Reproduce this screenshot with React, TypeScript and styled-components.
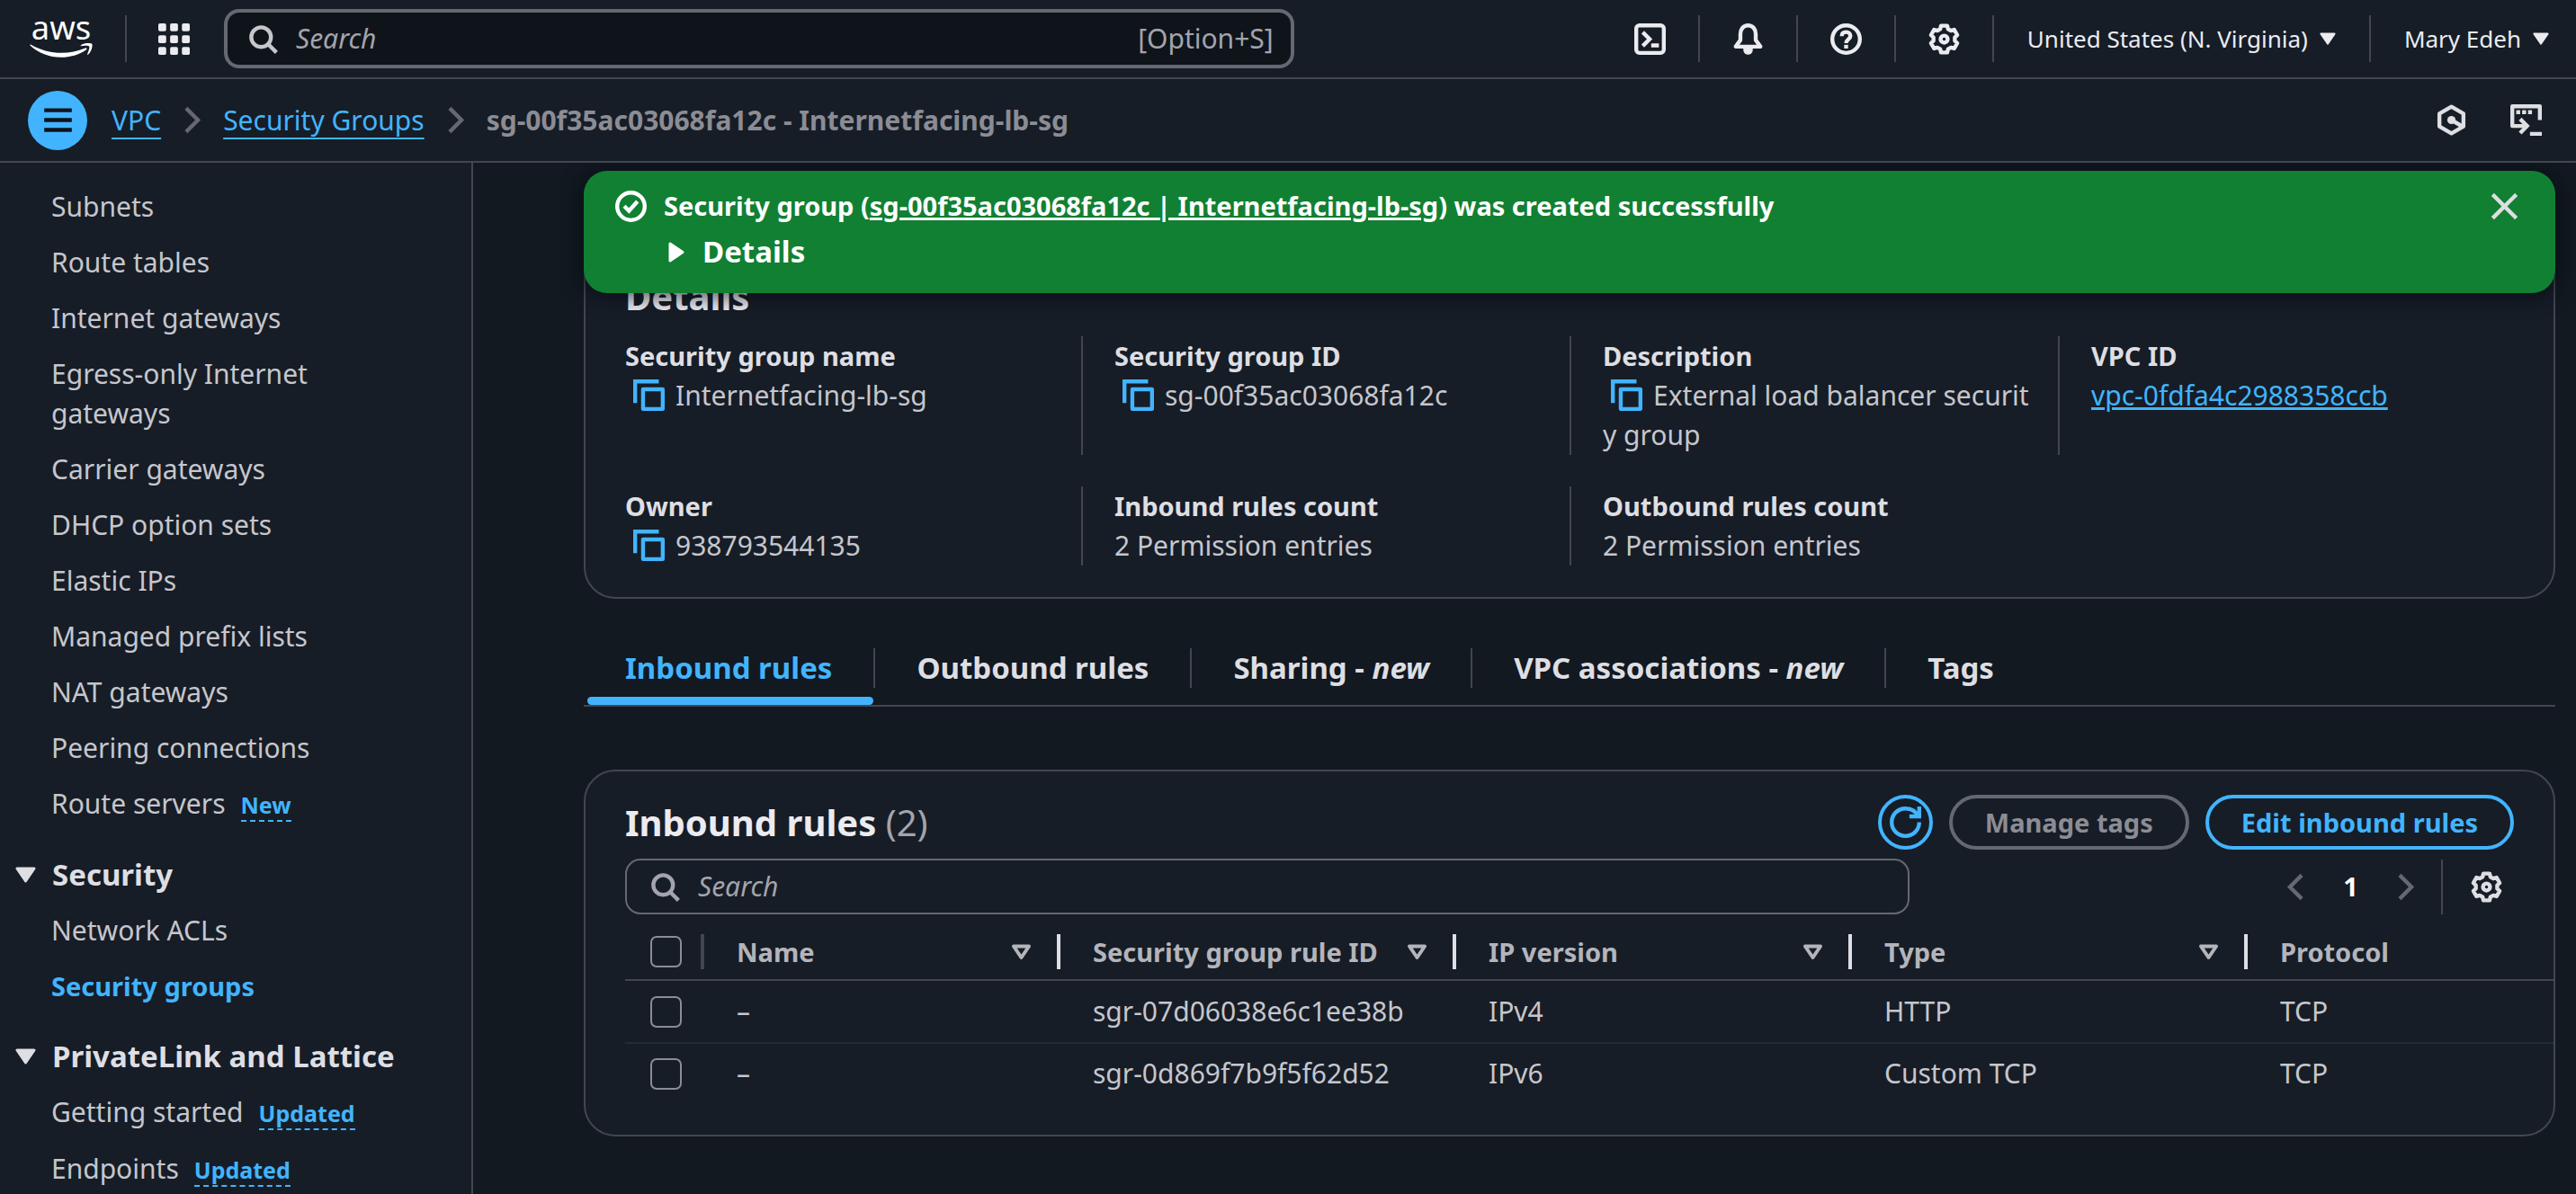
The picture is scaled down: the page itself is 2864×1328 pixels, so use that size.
import React from "react";
import styled, { createGlobalStyle, css } from "styled-components";

const color = {
  page: "#121920",
  surface: "#161d26",
  field: "#0f141a",
  line: "#424650",
  rowLine: "#232b37",
  control: "#656871",
  checkbox: "#8c8c94",
  link: "#42b4ff",
  heading: "#ebebf0",
  strong: "#dedee3",
  body: "#c6c6cd",
  muted: "#a4a4ad",
  disabled: "#8c8c94",
  success: "#118033",
};

const font = {
  badge: "25px",
  nav: "26px",
  label: "29px",
  body: "30px",
  title: "33px",
  heading: "40px",
};

const GlobalStyle = createGlobalStyle`
  *, *::before, *::after { box-sizing: border-box; }
  body {
    margin: 0;
    background: ${color.page};
    color: ${color.body};
    font-family: "Noto Sans", "Open Sans", sans-serif;
    font-size: ${font.body};
    line-height: 44px;
  }
  button, input { font: inherit; color: inherit; }
  button { background: none; border: 0; padding: 0; cursor: pointer; }
  h2, dl, dd, ul, p { margin: 0; padding: 0; }
  ul { list-style: none; }
  a { color: ${color.link}; }
`;

/* ---------- icons ---------- */

const Svg = styled.svg`
  display: block;
  flex: none;
  width: 35px;
  height: 35px;
  fill: none;
  stroke: currentColor;
  stroke-width: 2;
`;

const Icon = ({ children }: { children: React.ReactNode }) => (
  <Svg viewBox="0 0 16 16" aria-hidden="true">
    {children}
  </Svg>
);

const SearchIcon = () => (
  <Icon>
    <circle cx="7" cy="7" r="5" />
    <path d="m10.5 10.5 4.3 4.3" />
  </Icon>
);

const gearPath = (() => {
  const steps: string[] = [];
  for (let tooth = 0; tooth < 6; tooth += 1) {
    const middle = tooth * 60 - 90;
    [
      [5.5, -21],
      [7, -13],
      [7, 13],
      [5.5, 21],
    ].forEach(([radius, offset]) => {
      const angle = ((middle + offset) * Math.PI) / 180;
      steps.push(
        `${(8 + radius * Math.cos(angle)).toFixed(2)} ${(8 + radius * Math.sin(angle)).toFixed(2)}`,
      );
    });
  }
  return `M${steps.join("L")}Z`;
})();

const GearIcon = () => (
  <Icon>
    <path d={gearPath} strokeLinejoin="round" />
    <circle cx="8" cy="8" r="1.8" />
  </Icon>
);

const ShellIcon = () => (
  <Icon>
    <rect x="1" y="1" width="14" height="14" rx="1.6" />
    <path d="M4.3 4.5 7.8 8l-3.5 3.5M8.6 11.2h3.9" />
  </Icon>
);

const BellIcon = () => (
  <Icon>
    <path
      d="M8 1C5.6 1 4.1 3 4.1 5.4v3.1L1.7 11.8h12.6l-2.4-3.3V5.4C11.9 3 10.4 1 8 1Z"
      strokeLinejoin="round"
    />
    <path d="M5.6 12.5h4.8v1a2.4 2.4 0 0 1-4.8 0z" fill="currentColor" stroke="none" />
  </Icon>
);

const HelpIcon = () => (
  <Icon>
    <circle cx="8" cy="8" r="7" />
    <path d="M5.8 6.5C5.8 5.1 6.7 4.4 8 4.4s2.2.8 2.2 2C10.2 8 8 8.1 8 10" />
    <path d="M8 10.9v1.9" />
  </Icon>
);

const AppsIcon = () => (
  <Icon>
    <g fill="currentColor" stroke="none">
      {[0, 6, 12].map((y) =>
        [0, 6, 12].map((x) => <rect key={`${x}-${y}`} x={x} y={y} width="4" height="4" rx="0.8" />),
      )}
    </g>
  </Icon>
);

const MenuIcon = () => (
  <Icon>
    <path d="M1 3h14M1 8h14M1 13h14" />
  </Icon>
);

const ChevronRight = () => (
  <Icon>
    <path d="m5 2 6 6-6 6" />
  </Icon>
);

const ChevronLeft = () => (
  <Icon>
    <path d="M11 2 5 8l6 6" />
  </Icon>
);

const HexIcon = () => (
  <Icon>
    <path d="m8 1.2 6.1 3.5v6.6L8 14.8l-6.1-3.5V4.7z" strokeLinejoin="round" />
    <path d="m8 8 5.5 3.2" />
    <circle cx="8" cy="8" r="2.1" fill="currentColor" stroke="none" />
  </Icon>
);

const ConsoleIcon = () => (
  <Icon>
    <path d="M15 8V1H1v10h8" strokeLinejoin="round" />
    <path d="M5 7.5 8.5 11 5 14.6" />
    <path d="M3 4h2M6 4h2M9 4h2M10 15h6" />
  </Icon>
);

const CheckCircleIcon = () => (
  <Icon>
    <circle cx="8" cy="8" r="7" />
    <path d="m4.6 7.9 2.4 2.4 4.3-4.8" />
  </Icon>
);

const CloseIcon = () => (
  <Icon>
    <path d="m2 2 12 12M14 2 2 14" />
  </Icon>
);

const RefreshIcon = () => (
  <Icon>
    <path d="M15 8c0 3.9-3.1 7-7 7s-7-3.1-7-7 3.1-7 7-7c3.1 0 5.5 1.7 6.5 4.2" />
    <path d="M10 5h5V0" />
  </Icon>
);

const CopyIcon = () => (
  <Icon>
    <path d="M1 12V1h12" />
    <rect x="5" y="5" width="10" height="10" strokeLinejoin="round" />
  </Icon>
);

const CaretSvg = styled.svg<{ $width: number; $height: number }>`
  display: block;
  flex: none;
  width: ${(p) => p.$width}px;
  height: ${(p) => p.$height}px;
  stroke: currentColor;
  stroke-linejoin: round;
`;

const CaretDown = ({ small }: { small?: boolean }) => (
  <CaretSvg $width={small ? 18 : 23} $height={small ? 14 : 18} viewBox="0 0 23 18" fill="currentColor" strokeWidth="3">
    <path d="M2 2h19l-9.5 14z" />
  </CaretSvg>
);

const CaretRight = () => (
  <CaretSvg $width={18} $height={23} viewBox="0 0 18 23" fill="currentColor" strokeWidth="3">
    <path d="M2 2v19l14-9.5z" />
  </CaretSvg>
);

const SortCaret = () => (
  <CaretSvg $width={23} $height={18} viewBox="0 0 23 18" fill="none" strokeWidth="4">
    <path d="M3 2.5h17L11.5 15z" />
  </CaretSvg>
);

const LogoSvg = styled.svg`
  display: block;
  width: 70px;
  height: 42px;
  fill: #fff;
  overflow: visible;
`;

const Logo = () => (
  <LogoSvg viewBox="0 0 304 182" role="img" aria-label="aws">
    <text x="8" y="96" fontSize="158">
      aws
    </text>
    <path d="M273.5 143.7c-32.9 24.3-80.7 37.2-121.8 37.2-57.6 0-109.5-21.3-148.7-56.7-3.1-2.8-.3-6.6 3.4-4.4 42.4 24.6 94.7 39.5 148.8 39.5 36.5 0 76.6-7.6 113.5-23.2 5.5-2.5 10.2 3.6 4.8 7.6z" />
    <path d="M287.2 128.1c-4.2-5.4-27.8-2.6-38.5-1.3-3.2.4-3.7-2.4-.8-4.5 18.8-13.2 49.7-9.4 53.3-5 3.6 4.5-1 35.4-18.6 50.2-2.7 2.3-5.3 1.1-4.1-1.9 4-9.9 12.9-32.2 8.7-37.5z" />
  </LogoSvg>
);

/* ---------- global navigation ---------- */

const Shell = styled.div`
  display: flex;
  flex-direction: column;
  height: 100vh;
  overflow: hidden;
`;

const TopBar = styled.header`
  display: flex;
  align-items: center;
  flex: none;
  height: 88px;
  padding: 0 30px 0 33px;
  background: ${color.surface};
  border-bottom: 2px solid ${color.line};
  color: ${color.heading};
  font-size: ${font.nav};
`;

const LogoCell = styled.a`
  padding-right: 36px;
`;

const AppsButton = styled.button`
  display: flex;
  align-items: center;
  height: 52px;
  padding: 0 38px 0 35px;
  border-left: 2px solid ${color.line};
`;

const SearchField = styled.label<{ $filled?: boolean }>`
  display: flex;
  align-items: center;
  min-width: 0;
  padding: 0 25px;
  gap: 19px;
  border: 2px solid ${color.control};
  border-radius: 17px;
  color: ${color.muted};
  font-size: ${font.body};
  height: 62px;
  flex: none;
  width: 68%;

  ${(p) =>
    p.$filled &&
    css`
      flex: 10;
      width: auto;
      height: 66px;
      padding: 0 19px 0 22px;
      background: ${color.field};
      border-width: 4px;
      color: ${color.body};
    `}
`;

const SearchInput = styled.input`
  flex: 1;
  min-width: 0;
  padding: 0;
  border: 0;
  outline: 0;
  background: none;
  &::placeholder {
    color: ${color.muted};
    font-style: italic;
    opacity: 1;
  }
`;

const Shortcut = styled.span`
  color: ${color.muted};
`;

const Spacer = styled.div`
  flex: 3;
`;

const Tools = styled.div`
  display: flex;
  align-items: center;
`;

const NavButton = styled.button<{ $menu?: boolean }>`
  display: flex;
  align-items: center;
  gap: 13px;
  height: 52px;
  padding: 0 ${(p) => (p.$menu ? 37 : 36)}px;
  white-space: nowrap;
  &:not(:last-child) {
    border-right: 2px solid ${color.line};
  }
  &:last-child {
    padding-right: 0;
  }
`;

const ServiceBar = styled.div`
  display: flex;
  align-items: center;
  justify-content: space-between;
  flex: none;
  height: 93px;
  padding: 0 38px 0 31px;
  background: ${color.surface};
  border-bottom: 2px solid ${color.line};
  color: ${color.strong};
`;

const Crumbs = styled.nav`
  display: flex;
  align-items: center;
  gap: 17px;
  color: ${color.control};
  strong {
    color: ${color.disabled};
  }
  a {
    text-decoration-thickness: 2px;
    text-underline-offset: 8px;
    text-decoration-skip-ink: none;
  }
`;

const MenuButton = styled.button`
  display: grid;
  place-items: center;
  width: 66px;
  height: 66px;
  margin-right: 10px;
  border-radius: 50%;
  background: ${color.link};
  color: ${color.field};
`;

const ServiceTools = styled.div`
  display: flex;
  gap: 48px;
`;

/* ---------- side navigation ---------- */

const Body = styled.div`
  display: grid;
  grid-template-columns: 526px minmax(0, 1fr);
  flex: 1;
  min-height: 0;
`;

const Sidebar = styled.nav`
  overflow: hidden;
  background: ${color.surface};
  border-right: 2px solid ${color.line};
`;

const SideScroll = styled.div`
  display: flex;
  flex-direction: column;
  gap: 34px;
  margin-top: -35px;
`;

const SideSection = styled.section`
  display: flex;
  flex-direction: column;
  gap: 18px;
`;

const SideHeading = styled.button`
  display: flex;
  align-items: center;
  gap: 18px;
  padding-left: 17px;
  color: ${color.strong};
  font-size: ${font.title};
  font-weight: 700;
`;

const SideList = styled.ul`
  display: flex;
  flex-direction: column;
  gap: 18px;
  padding: 0 88px 0 57px;
`;

const SideLink = styled.a<{ $active?: boolean }>`
  color: ${(p) => (p.$active ? color.link : color.body)};
  font-size: ${(p) => (p.$active ? font.label : font.body)};
  font-weight: ${(p) => (p.$active ? 700 : 400)};
  text-decoration: none;
`;

const Badge = styled.a`
  margin-left: 17px;
  border-bottom: 2px dashed ${color.link};
  font-size: ${font.badge};
  font-weight: 700;
  text-decoration: none;
`;

/* ---------- main content ---------- */

const Main = styled.main`
  position: relative;
  overflow: hidden;
  padding: 94px 23px 0 123px;
`;

const Flash = styled.div`
  position: absolute;
  z-index: 1;
  top: 9px;
  left: 123px;
  right: 23px;
  display: flex;
  align-items: flex-start;
  gap: 19px;
  padding: 17px 39px 24px 35px;
  border-radius: 26px;
  background: ${color.success};
  box-shadow: 0 2px 22px 2px rgba(5, 8, 20, 0.7);
  color: #fff;
  > svg,
  > button {
    margin-top: 5px;
  }
`;

const FlashText = styled.div`
  flex: 1;
  font-size: ${font.label};
  font-weight: 700;
  a {
    color: inherit;
    text-decoration-thickness: 3px;
  }
`;

const FlashToggle = styled.button`
  display: flex;
  align-items: center;
  gap: 20px;
  margin-top: 7px;
  padding-left: 5px;
  font-size: ${font.title};
  font-weight: 700;
`;

const FlashClose = styled.button`
  color: ${color.strong};
`;

const Card = styled.section`
  padding: 26px 44px 35px;
  border: 2px solid ${color.line};
  border-radius: 35px;
  background: ${color.surface};
`;

const Heading = styled.h2`
  color: ${color.heading};
  font-size: ${font.heading};
  line-height: 53px;
  font-weight: 700;
`;

const Count = styled.span`
  color: ${color.muted};
  font-weight: 400;
`;

const Facts = styled.dl`
  display: grid;
  grid-template-columns: repeat(4, minmax(0, 1fr));
  gap: 35px 72px;
  margin-top: 18px;
`;

const Fact = styled.div`
  &:not(:nth-child(4n + 1)) {
    margin-left: -36px;
    padding-left: 35px;
    border-left: 2px solid ${color.line};
  }
  dt {
    color: ${color.strong};
    font-size: ${font.label};
    font-weight: 700;
  }
  dd {
    margin-right: -10px;
    word-break: break-all;
  }
  dd a {
    text-decoration-thickness: 3px;
  }
`;

const CopyButton = styled.button`
  display: inline-block;
  margin: 4px 12px 0 9px;
  vertical-align: top;
  line-height: 0;
  color: ${color.link};
`;

const Tabs = styled.div`
  display: flex;
  margin: 55px 0 70px;
  border-bottom: 2px solid ${color.line};
`;

const Tab = styled.button<{ $active?: boolean }>`
  position: relative;
  padding-bottom: 19px;
  color: ${(p) => (p.$active ? color.link : color.strong)};
  font-size: ${font.title};
  font-weight: 700;
  span {
    display: block;
    padding: 0 46px;
    border-right: 2px solid ${color.line};
  }
  &:last-child span {
    border-right: 0;
  }
  ${(p) =>
    p.$active &&
    css`
      &::after {
        content: "";
        position: absolute;
        inset: auto 2px 0 4px;
        height: 9px;
        border-radius: 5px;
        background: ${color.link};
      }
    `}
`;

const Row = styled.div`
  display: flex;
  align-items: center;
  justify-content: space-between;
`;

const Actions = styled.div`
  display: flex;
  gap: 18px;
`;

const ActionButton = styled.button<{ $round?: boolean }>`
  display: grid;
  place-items: center;
  height: 61px;
  ${(p) => (p.$round ? "width: 61px;" : "padding: 0 36px;")}
  border: 4px solid ${color.link};
  border-radius: 31px;
  color: ${color.link};
  font-size: ${font.label};
  font-weight: 700;
  &:disabled {
    border-color: ${color.control};
    color: ${color.disabled};
  }
`;

const FilterRow = styled(Row)`
  margin-top: 10px;
`;

const Pager = styled.div`
  display: flex;
  align-items: center;
  color: ${color.control};
`;

const PageNumber = styled.button`
  width: 87px;
  color: #fff;
  font-size: ${font.label};
  font-weight: 700;
`;

const Preferences = styled.button`
  display: flex;
  align-items: center;
  height: 61px;
  margin-left: 22px;
  padding: 0 13px 0 31px;
  border-left: 2px solid ${color.line};
  color: ${color.strong};
`;

const TableWrap = styled.div`
  margin-right: -44px;
`;

const Table = styled.table`
  width: 100%;
  table-layout: fixed;
  border-collapse: separate;
  border-spacing: 0;
  text-align: left;
  th,
  td {
    padding: 0;
  }
  th {
    padding: 22px 0 11px;
    border-bottom: 2px solid ${color.line};
    color: #b4b4bb;
    font-size: ${font.label};
  }
  td {
    height: 70px;
    padding-left: 36px;
  }
  tr:not(:last-child) td {
    border-bottom: 2px solid ${color.rowLine};
  }
  td:first-child {
    padding-left: 28px;
  }
  tr:last-child td {
    height: 66px;
  }
`;

const Col = styled.col<{ $width?: number }>`
  ${(p) => p.$width && `width: ${p.$width}px;`}
`;

const HeadCell = styled.div<{ $check?: boolean; $last?: boolean }>`
  display: flex;
  align-items: center;
  justify-content: space-between;
  height: 39px;
  padding: 0 ${(p) => (p.$check ? 17 : 28)}px 0 ${(p) => (p.$check ? 28 : 36)}px;
  border-right: ${(p) => (p.$last ? 0 : 4)}px solid ${(p) => (p.$check ? color.line : color.strong)};
  white-space: nowrap;
`;

const Checkbox = styled.input.attrs({ type: "checkbox" })`
  display: block;
  appearance: none;
  width: 35px;
  height: 35px;
  margin: 0;
  border: 2px solid ${color.checkbox};
  border-radius: 7px;
`;

/* ---------- data ---------- */

type Item = { label: string; badge?: string; active?: boolean };

const sections: { title?: string; items: Item[] }[] = [
  {
    items: [
      { label: "Your VPCs" },
      { label: "Subnets" },
      { label: "Route tables" },
      { label: "Internet gateways" },
      { label: "Egress-only Internet gateways" },
      { label: "Carrier gateways" },
      { label: "DHCP option sets" },
      { label: "Elastic IPs" },
      { label: "Managed prefix lists" },
      { label: "NAT gateways" },
      { label: "Peering connections" },
      { label: "Route servers", badge: "New" },
    ],
  },
  { title: "Security", items: [{ label: "Network ACLs" }, { label: "Security groups", active: true }] },
  {
    title: "PrivateLink and Lattice",
    items: [
      { label: "Getting started", badge: "Updated" },
      { label: "Endpoints", badge: "Updated" },
    ],
  },
];

const facts: { term: string; value: string; copy?: boolean; link?: boolean }[] = [
  { term: "Security group name", value: "Internetfacing-lb-sg", copy: true },
  { term: "Security group ID", value: "sg-00f35ac03068fa12c", copy: true },
  { term: "Description", value: "External load balancer security group", copy: true },
  { term: "VPC ID", value: "vpc-0fdfa4c2988358ccb", link: true },
  { term: "Owner", value: "938793544135", copy: true },
  { term: "Inbound rules count", value: "2 Permission entries" },
  { term: "Outbound rules count", value: "2 Permission entries" },
];

const tabs: { label: string; isNew?: boolean }[] = [
  { label: "Inbound rules" },
  { label: "Outbound rules" },
  { label: "Sharing", isNew: true },
  { label: "VPC associations", isNew: true },
  { label: "Tags" },
];

const columns = ["Name", "Security group rule ID", "IP version", "Type", "Protocol"];

const rules = [
  ["–", "sgr-07d06038e6c1ee38b", "IPv4", "HTTP", "TCP"],
  ["–", "sgr-0d869f7b9f5f62d52", "IPv6", "Custom TCP", "TCP"],
];

/* ---------- page ---------- */

export default function App() {
  return (
    <>
      <GlobalStyle />
      <Shell>
        <TopBar>
          <LogoCell href="#home">
            <Logo />
          </LogoCell>
          <AppsButton aria-label="Services">
            <AppsIcon />
          </AppsButton>
          <SearchField $filled>
            <SearchIcon />
            <SearchInput type="text" placeholder="Search" aria-label="Search services" />
            <Shortcut>[Option+S]</Shortcut>
          </SearchField>
          <Spacer />
          <Tools>
            <NavButton aria-label="CloudShell">
              <ShellIcon />
            </NavButton>
            <NavButton aria-label="Notifications">
              <BellIcon />
            </NavButton>
            <NavButton aria-label="Help">
              <HelpIcon />
            </NavButton>
            <NavButton aria-label="Settings">
              <GearIcon />
            </NavButton>
            <NavButton $menu>
              United States (N. Virginia)
              <CaretDown small />
            </NavButton>
            <NavButton $menu>
              Mary Edeh
              <CaretDown small />
            </NavButton>
          </Tools>
        </TopBar>

        <ServiceBar>
          <Crumbs aria-label="Breadcrumbs">
            <MenuButton aria-label="Toggle navigation">
              <MenuIcon />
            </MenuButton>
            <a href="#vpc">VPC</a>
            <ChevronRight />
            <a href="#groups">Security Groups</a>
            <ChevronRight />
            <strong>sg-00f35ac03068fa12c - Internetfacing-lb-sg</strong>
          </Crumbs>
          <ServiceTools>
            <button aria-label="Amazon Q">
              <HexIcon />
            </button>
            <button aria-label="Console to code">
              <ConsoleIcon />
            </button>
          </ServiceTools>
        </ServiceBar>

        <Body>
          <Sidebar aria-label="VPC">
            <SideScroll>
              {sections.map((section, index) => (
                <SideSection key={index}>
                  {section.title && (
                    <SideHeading>
                      <CaretDown />
                      {section.title}
                    </SideHeading>
                  )}
                  <SideList>
                    {section.items.map((item) => (
                      <li key={item.label}>
                        <SideLink href="#nav" $active={item.active}>
                          {item.label}
                        </SideLink>
                        {item.badge && <Badge href="#info">{item.badge}</Badge>}
                      </li>
                    ))}
                  </SideList>
                </SideSection>
              ))}
            </SideScroll>
          </Sidebar>

          <Main>
            <Flash role="status">
              <CheckCircleIcon />
              <FlashText>
                <p>
                  Security group (<a href="#group">sg-00f35ac03068fa12c | Internetfacing-lb-sg</a>) was created
                  successfully
                </p>
                <FlashToggle>
                  <CaretRight />
                  Details
                </FlashToggle>
              </FlashText>
              <FlashClose aria-label="Dismiss">
                <CloseIcon />
              </FlashClose>
            </Flash>

            <Card>
              <Heading>Details</Heading>
              <Facts>
                {facts.map((fact) => (
                  <Fact key={fact.term}>
                    <dt>{fact.term}</dt>
                    <dd>
                      {fact.copy && (
                        <CopyButton aria-label={`Copy ${fact.term}`}>
                          <CopyIcon />
                        </CopyButton>
                      )}
                      {fact.link ? <a href="#vpc-detail">{fact.value}</a> : fact.value}
                    </dd>
                  </Fact>
                ))}
              </Facts>
            </Card>

            <Tabs role="tablist">
              {tabs.map((tab, index) => (
                <Tab key={tab.label} role="tab" aria-selected={index === 0} $active={index === 0}>
                  <span>
                    {tab.label}
                    {tab.isNew && (
                      <>
                        {" - "}
                        <em>new</em>
                      </>
                    )}
                  </span>
                </Tab>
              ))}
            </Tabs>

            <Card>
              <Row>
                <Heading>
                  Inbound rules <Count>(2)</Count>
                </Heading>
                <Actions>
                  <ActionButton $round aria-label="Refresh">
                    <RefreshIcon />
                  </ActionButton>
                  <ActionButton disabled>Manage tags</ActionButton>
                  <ActionButton>Edit inbound rules</ActionButton>
                </Actions>
              </Row>
              <FilterRow>
                <SearchField>
                  <SearchIcon />
                  <SearchInput type="text" placeholder="Search" aria-label="Search rules" />
                </SearchField>
                <Pager>
                  <button aria-label="Previous page">
                    <ChevronLeft />
                  </button>
                  <PageNumber>1</PageNumber>
                  <button aria-label="Next page">
                    <ChevronRight />
                  </button>
                  <Preferences aria-label="Preferences">
                    <GearIcon />
                  </Preferences>
                </Pager>
              </FilterRow>
              <TableWrap>
                <Table>
                  <colgroup>
                    <Col $width={88} />
                    <Col $width={396} />
                    <Col $width={440} />
                    <Col $width={440} />
                    <Col $width={440} />
                    <Col />
                  </colgroup>
                  <thead>
                    <tr>
                      <th>
                        <HeadCell $check>
                          <Checkbox aria-label="Select all rules" />
                        </HeadCell>
                      </th>
                      {columns.map((name, index) => (
                        <th key={name}>
                          <HeadCell $last={index === columns.length - 1}>
                            {name}
                            {index < columns.length - 1 && <SortCaret />}
                          </HeadCell>
                        </th>
                      ))}
                    </tr>
                  </thead>
                  <tbody>
                    {rules.map((rule) => (
                      <tr key={rule[1]}>
                        <td>
                          <Checkbox aria-label={`Select ${rule[1]}`} />
                        </td>
                        {rule.map((value, index) => (
                          <td key={index}>{value}</td>
                        ))}
                      </tr>
                    ))}
                  </tbody>
                </Table>
              </TableWrap>
            </Card>
          </Main>
        </Body>
      </Shell>
    </>
  );
}
